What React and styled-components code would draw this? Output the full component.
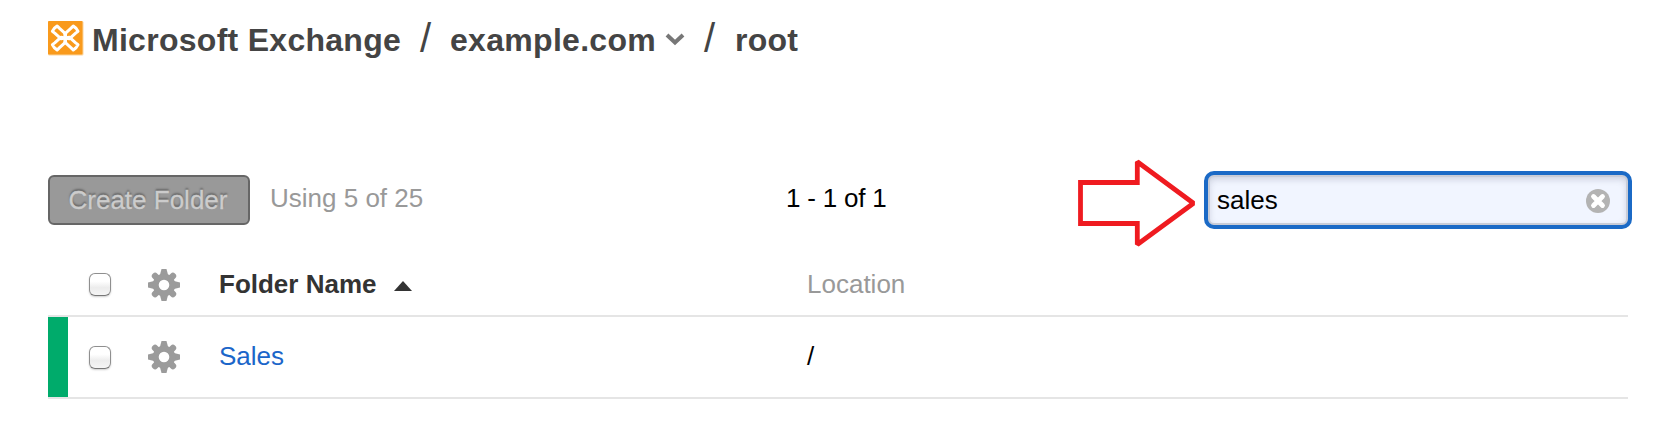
import React from "react";
import styled, { createGlobalStyle } from "styled-components";

const GlobalStyle = createGlobalStyle`
  *, *::before, *::after { box-sizing: border-box; }
  body {
    margin: 0;
    background: #fff;
    color: #000;
    font-family: "Liberation Sans", Arial, sans-serif;
    font-size: 26px;
    line-height: 30px;
  }
`;

const Page = styled.main`
  display: flex;
  flex-direction: column;
  height: 435px;
  padding: 0 51px 0 48px;
  overflow: hidden;
`;

const Breadcrumb = styled.nav`
  display: flex;
  align-items: center;
  height: 80px;
  margin-bottom: 73px;
  color: #444;
`;

const Crumb = styled.span`
  font-size: 32px;
  font-weight: bold;
  line-height: 36px;
  letter-spacing: ${(p) => p.$spacing || 0}px;
  width: ${(p) => p.$width}px;
  white-space: nowrap;
`;

const Slash = styled.span`
  width: ${(p) => p.$width}px;
  font-size: 40px;
  line-height: 44px;
  margin-top: -5px;
`;

const Logo = styled.svg`
  width: 36px;
  height: 35px;
  margin: -3px 8px 0 0;
`;

const Chevron = styled.svg`
  width: 20px;
  height: 14px;
  margin: -3px 19px 0 0;
`;

const Toolbar = styled.section`
  display: grid;
  grid-template-columns: 202px 517px 291px 146px 428px;
  align-items: center;
  height: 94px;
`;

const CreateButton = styled.button`
  height: 50px;
  padding: 0 2px 0 0;
  border: 2px solid #666;
  border-radius: 6px;
  background: #999;
  color: #ccc;
  font: inherit;
  -webkit-text-stroke: 0.3px #ccc;
  text-shadow: 0 -2px 2px rgba(0, 0, 0, 0.34);
`;

const Info = styled.span`
  padding-left: ${(p) => p.$indent}px;
  margin-top: -4px;
  color: ${(p) => p.$color || "#000"};
  letter-spacing: ${(p) => p.$spacing || 0}px;
`;

const Arrow = styled.svg`
  width: 146px;
  height: 94px;
`;

const SearchBox = styled.div`
  display: flex;
  align-items: center;
  justify-content: space-between;
  height: 58px;
  padding: 0 18px 0 9px;
  border: 4px solid #1b6ac6;
  border-radius: 10px;
  background: #f1f5ff;
  box-shadow: inset 0 0 0 2px #c8ccd7, inset 0 3px 7px 1px rgba(80, 85, 110, 0.24);
`;

const SearchInput = styled.input`
  width: 300px;
  padding: 0;
  border: 0;
  outline: 0;
  background: transparent;
  color: #000;
  font: inherit;
`;

const ClearIcon = styled.svg`
  width: 24px;
  height: 24px;
  margin-top: 2px;
`;

const Row = styled.div`
  display: grid;
  grid-template-columns: 20px 80px 71px 588px 1fr;
  align-items: center;
  height: ${(p) => p.$height}px;
  border-bottom: 2px solid #e5e5e5;
`;

const Marker = styled.div`
  align-self: stretch;
  background: ${(p) => p.$color || "transparent"};
`;

const Checkbox = styled.input`
  appearance: none;
  width: 22px;
  height: 23px;
  margin: ${(p) => p.$top || 0}px 0 0 21px;
  border: 1.5px solid #8f8f8f;
  border-bottom-color: #777;
  border-radius: 6px;
  background: linear-gradient(#fff 0 35%, #ececec 65%, #f5f5f5);
  box-shadow: 0 1px 2px rgba(0, 0, 0, 0.2);
`;

const GearSvg = styled.svg`
  width: 32px;
  height: 32px;
  margin-top: ${(p) => p.$top || 0}px;
`;

const Cell = styled.span`
  display: flex;
  align-items: center;
  margin-top: ${(p) => p.$top || 0}px;
  color: ${(p) => p.$color || "#000"};
  font-weight: ${(p) => (p.$bold ? "bold" : "normal")};
`;

const FolderLink = styled.a`
  color: #1b66c9;
  text-decoration: none;
`;

const SortIcon = styled.svg`
  width: 18px;
  height: 10px;
  margin: 3px 0 0 17px;
`;

function Gear({ top }) {
  return (
    <GearSvg $top={top} viewBox="-16 -16 32 32" aria-hidden="true">
      <g fill="#9b9b9b">
        {[0, 90, 180, 270].map((angle) => (
          <path key={angle} transform={`rotate(${angle})`} d="M-2.5-16h5L4.6-8h-9.2Z" />
        ))}
        {[45, 135, 225, 315].map((angle) => (
          <path key={angle} transform={`rotate(${angle})`} d="M-3.2-13Q-3.2-15.8 0-15.8T3.2-13L3.4-8h-6.8Z" />
        ))}
      </g>
      <circle r="8.3" fill="none" stroke="#9b9b9b" strokeWidth="6" />
    </GearSvg>
  );
}

export default function App() {
  return (
    <>
      <GlobalStyle />
      <Page>
        <Breadcrumb>
          <Logo viewBox="0 0 36 35" aria-hidden="true">
            <rect width="35.5" height="34.5" rx="1.5" fill="#fbd49b" />
            <rect width="34.5" height="33.5" rx="1" fill="#f99a1c" />
            <g fill="none" stroke="#fff" strokeWidth="3" strokeLinejoin="round">
              {[42, 138, 222, 318].map((angle) => (
                <path
                  key={angle}
                  transform={`translate(17.2 17) rotate(${angle})`}
                  d="M0 0L2.5-3.4H11L14-3.6L14.6 0L14 3.6L11 3.4H2.5Z"
                />
              ))}
            </g>
          </Logo>
          <Crumb $width={328} $spacing={0.28}>Microsoft Exchange</Crumb>
          <Slash $width={30}>/</Slash>
          <Crumb $width={215} $spacing={0.3}>example.com</Crumb>
          <Chevron viewBox="0 0 20 14" aria-hidden="true">
            <path d="M2 3L10 10.5L18 3" fill="none" stroke="#777" strokeWidth="4" />
          </Chevron>
          <Slash $width={31}>/</Slash>
          <Crumb $width={70} $spacing={0.2}>root</Crumb>
        </Breadcrumb>

        <Toolbar>
          <CreateButton>Create Folder</CreateButton>
          <Info $indent={20} $color="#999">Using 5 of 25</Info>
          <Info $indent={19} $spacing={-0.2}>1 - 1 of 1</Info>
          <Arrow viewBox="0 0 146 94" aria-hidden="true">
            <path
              d="M22.5 29.5H79.3V8.8L135.5 50.3L79.3 91.5V70.5H22.5Z"
              fill="none"
              stroke="#ef1b20"
              strokeWidth="4.8"
              strokeLinejoin="miter"
              strokeMiterlimit="1.5"
            />
          </Arrow>
          <SearchBox>
            <SearchInput defaultValue="sales" aria-label="Search" />
            <ClearIcon viewBox="0 0 24 24" aria-hidden="true">
              <circle cx="12" cy="12" r="12" fill="#b3b3b3" />
              <path d="M7.5 7.5L16.5 16.5M16.5 7.5L7.5 16.5" stroke="#fff" strokeWidth="4.8" strokeLinecap="round" />
            </ClearIcon>
          </SearchBox>
        </Toolbar>

        <Row $height={70}>
          <Marker />
          <Checkbox type="checkbox" $top={7} />
          <Gear top={8} />
          <Cell $bold $top={6} $color="#333">
            Folder Name
            <SortIcon viewBox="0 0 18 10" aria-hidden="true">
              <path d="M0 10L9 0L18 10Z" fill="#333" />
            </SortIcon>
          </Cell>
          <Cell $top={6} $color="#999">Location</Cell>
        </Row>
        <Row $height={82}>
          <Marker $color="#00ab6b" />
          <Checkbox type="checkbox" />
          <Gear />
          <Cell $top={-2}><FolderLink>Sales</FolderLink></Cell>
          <Cell $top={-2}>/</Cell>
        </Row>
      </Page>
    </>
  );
}
